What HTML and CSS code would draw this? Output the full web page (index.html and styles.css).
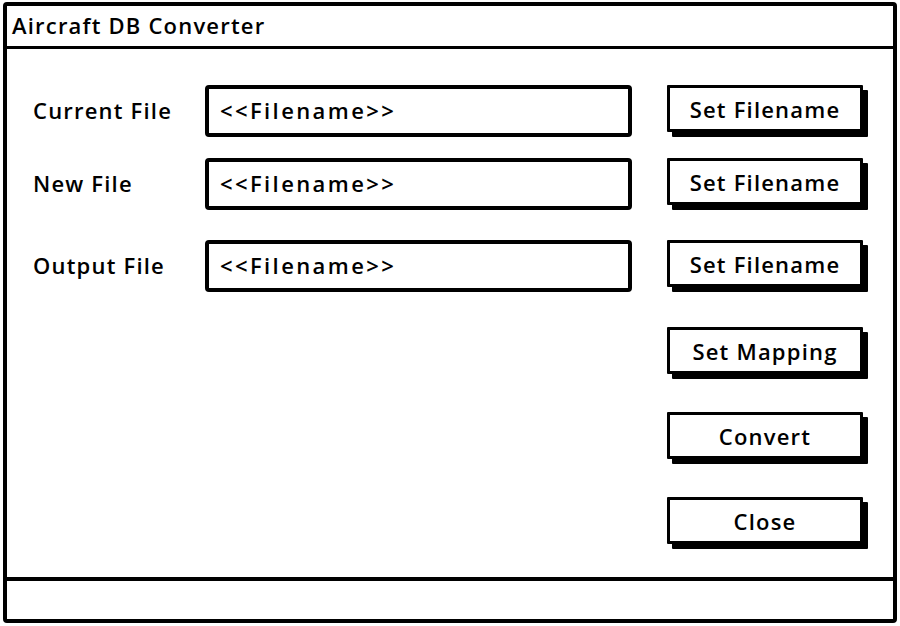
FILE: index.html
```html
<!DOCTYPE html>
<html lang="en">
<head>
    <meta charset="UTF-8">
    <title>Aircraft DB Converter</title>
    <link rel="stylesheet" href="styles.css">
</head>
<body>
    <div class="window">
        <div class="title-bar">Aircraft DB Converter</div>
        <div class="content">
            <div class="row row-first">
                <label class="label">Current File</label>
                <div class="field">&lt;&lt;Filename&gt;&gt;</div>
                <button class="btn">Set Filename</button>
            </div>
            <div class="row row-second">
                <label class="label">New File</label>
                <div class="field">&lt;&lt;Filename&gt;&gt;</div>
                <button class="btn">Set Filename</button>
            </div>
            <div class="row row-third">
                <label class="label">Output File</label>
                <div class="field">&lt;&lt;Filename&gt;&gt;</div>
                <button class="btn">Set Filename</button>
            </div>
            <div class="row row-action">
                <button class="btn">Set Mapping</button>
            </div>
            <div class="row row-action">
                <button class="btn">Convert</button>
            </div>
            <div class="row row-action">
                <button class="btn">Close</button>
            </div>
        </div>
        <div class="status-bar"></div>
    </div>
</body>
</html>
```

FILE: styles.css
```css
body {
    margin: 0;
    padding: 0;
    background-color: #fff;
    font-family: "Open Sans", Arial, sans-serif;
    font-weight: 600;
    font-size: 22px;
    letter-spacing: 1.2px;
    color: #000;
}

.window {
    box-sizing: border-box;
    margin: 2px 3px 0 3px;
    height: 621px;
    border: 4px solid #000;
    border-radius: 4px;
    display: flex;
    flex-direction: column;
}

.title-bar {
    height: 38px;
    border-bottom: 3px solid #000;
    padding: 0 0 2px 5px;
    display: flex;
    align-items: center;
}

.content {
    flex: 1;
    padding: 36px 0 0 26px;
}

.row {
    display: grid;
    grid-template-columns: 137px 427px 196px;
    column-gap: 35px;
    align-items: center;
}

.row-second { margin-top: 21px; }
.row-third { margin-top: 30px; }
.row-action { margin-top: 35px; }
.row-action + .row-action { margin-top: 38px; }

.row-action .btn {
    grid-column: 3;
}

.label {
    white-space: nowrap;
    padding-bottom: 2px;
}

.field {
    box-sizing: border-box;
    height: 52px;
    border: 4px solid #000;
    border-radius: 4px;
    padding: 0 0 2px 11px;
    display: flex;
    align-items: center;
    letter-spacing: 2.4px;
}

.btn {
    box-sizing: border-box;
    height: 47px;
    align-self: start;
    border: 3px solid #000;
    border-radius: 1px;
    background-color: #fff;
    box-shadow: 5px 5px 0 #000;
    font-family: inherit;
    font-weight: inherit;
    font-size: inherit;
    letter-spacing: inherit;
    color: #000;
    padding: 0;
}

.status-bar {
    height: 38px;
    border-top: 4px solid #000;
}
```
